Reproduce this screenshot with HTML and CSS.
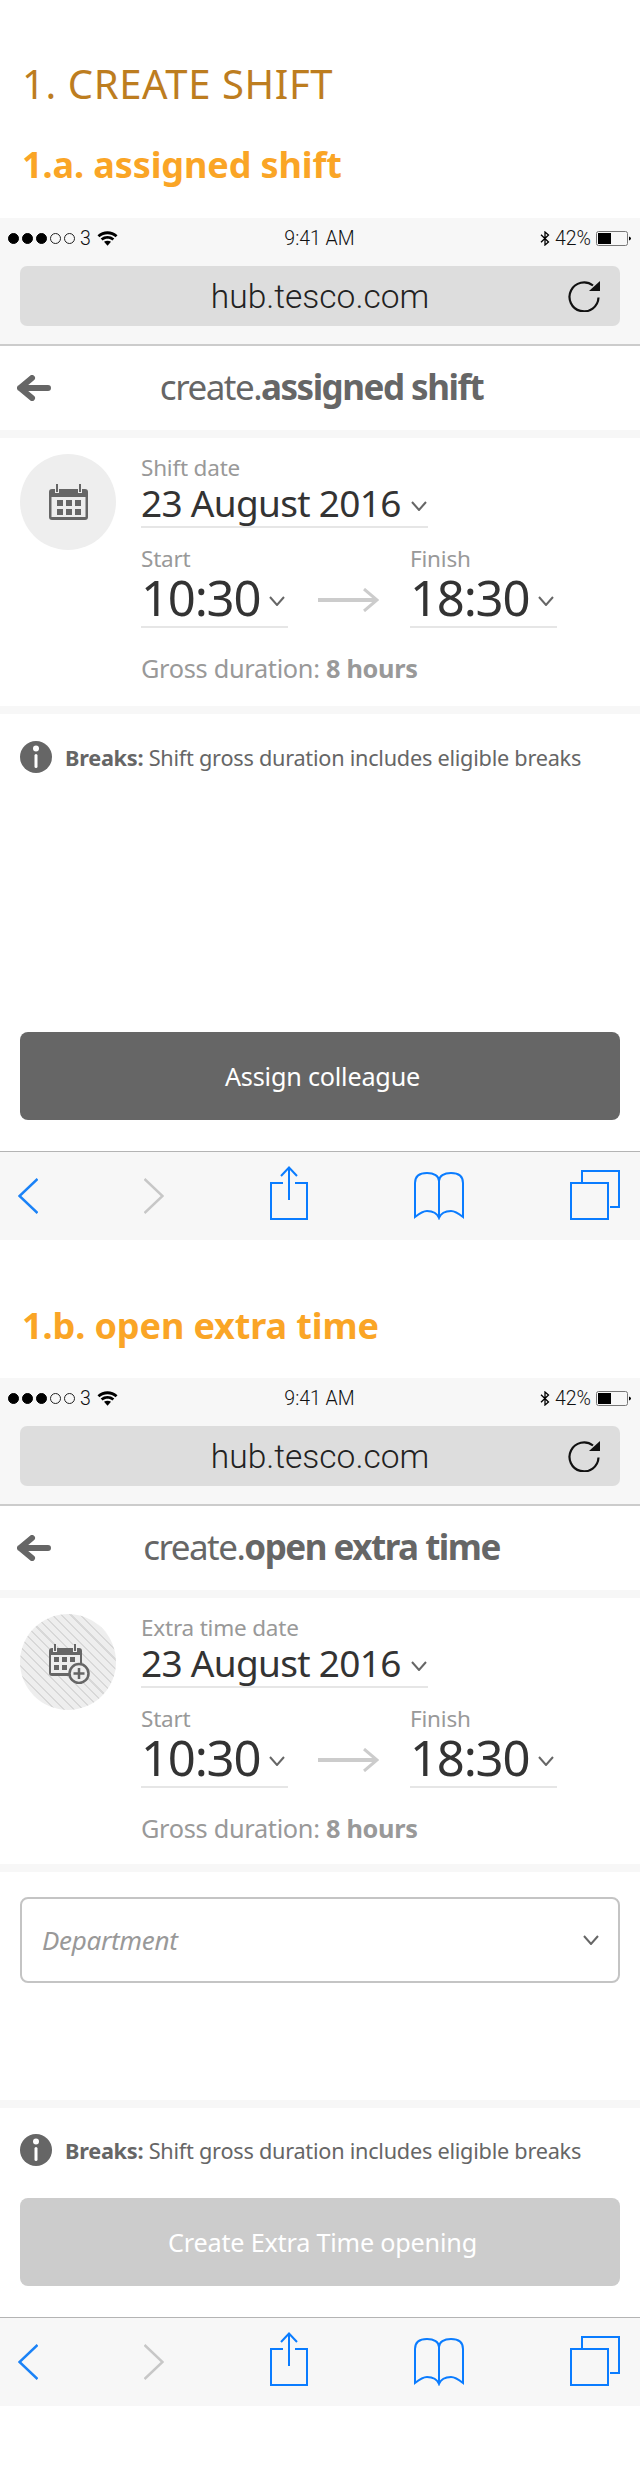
FILE: index.html
```html
<!DOCTYPE html>
<html lang="en">
<head>
<meta charset="utf-8">
<title>Create shift</title>
<link rel="stylesheet" href="styles.css">
</head>
<body>
<svg class="defs" xmlns="http://www.w3.org/2000/svg">
  <symbol id="wifi" viewBox="0 0 21 16"><path d="M0.5 5.2C6 0 15 0 20.5 5.2L18.6 7.2C14 3.2 7 3.2 2.4 7.2Z"/><path d="M3.7 8.5C7.6 5.2 13.4 5.2 17.3 8.5L15.4 10.5C12.6 8.2 8.4 8.2 5.6 10.5Z"/><path d="M7 11.8C9 10.3 12 10.3 14 11.8L10.5 15.8Z"/></symbol>
  <symbol id="bt" viewBox="0 0 10 15"><path d="M1 3.8L8.5 11L5 14V1L8.5 4L1 11.2" fill="none" stroke="#000" stroke-width="1.3"/></symbol>
  <symbol id="battery" viewBox="0 0 35 15"><rect x="0.5" y="0.5" width="31" height="14" rx="2" fill="none" stroke="#777"/><rect x="2" y="2" width="13" height="11" fill="#000"/><path d="M33 5.5C34.5 6 35 6.8 35 7.5C35 8.2 34.5 9 33 9.5Z" fill="#000"/></symbol>
  <symbol id="reload" viewBox="0 0 32 32"><path d="M25 5.5A14.5 14.5 0 1 0 30.5 17.5" fill="none" stroke="#111" stroke-width="2.2"/><path d="M21 11L32 11V1Z" fill="#111"/></symbol>
  <symbol id="back" viewBox="0 0 34 26"><path d="M3 13H31M15 3L3 13L15 23" fill="none" stroke="#666" stroke-width="6" stroke-linecap="round" stroke-linejoin="round"/></symbol>
  <symbol id="chev" viewBox="0 0 16 10"><path d="M1 1L8 9L15 1" fill="none" stroke="#666" stroke-width="2"/></symbol>
  <symbol id="long" viewBox="0 0 61 24"><path d="M0 12H59" fill="none" stroke="#ccc" stroke-width="4"/><path d="M46 1L59 12L46 23" fill="none" stroke="#ccc" stroke-width="3"/></symbol>
  <symbol id="cal" viewBox="0 0 39 36">
    <rect y="5" width="39" height="31" rx="3" fill="#666"/><rect x="2.5" y="13" width="34" height="20" fill="#eee"/>
    <path d="M8 1V9M31 1V9" stroke="#eee" stroke-width="4"/><path d="M8 0V8M31 0V8" stroke="#666" stroke-width="2"/>
    <path d="M8 16h6v6h-6zM17 16h6v6h-6zM26 16h6v6h-6zM8 25h6v6h-6zM17 25h6v6h-6zM26 25h6v6h-6z" fill="#666"/>
  </symbol>
  <symbol id="calplus" viewBox="0 0 41 40">
    <rect y="4" width="33" height="28" rx="3" fill="#666"/><rect x="2" y="11" width="29" height="18" fill="#eee"/>
    <path d="M6 1V8M26 1V8" stroke="#eee" stroke-width="4"/><path d="M6 0V7M26 0V7" stroke="#666" stroke-width="2"/>
    <path d="M5 13h5v5h-5zM13 13h5v5h-5zM21 13h5v5h-5zM5 21h5v5h-5zM13 21h5v5h-5z" fill="#666"/>
    <circle cx="30" cy="29.500" r="9.500" fill="#eee" stroke="#666" stroke-width="2.500"/><path d="M30 24V35M24.500 29.500H35.500" stroke="#666" stroke-width="2.500"/>
  </symbol>
  <symbol id="info" viewBox="0 0 32 32"><circle cx="16" cy="16" r="16" fill="#666"/><circle cx="16" cy="7.500" r="3" fill="#fff"/><rect x="14.500" y="13" width="3" height="14" rx="1.500" fill="#fff"/></symbol>
  <symbol id="tb-prev" viewBox="0 0 20 36"><path d="M19.500 1L1.500 18L19.500 35" fill="none" stroke="#1a82f7" stroke-width="2.500"/></symbol>
  <symbol id="tb-next" viewBox="0 0 20 36"><path d="M0.500 1L18.500 18L0.500 35" fill="none" stroke="#c7c7c7" stroke-width="2.500"/></symbol>
  <symbol id="tb-share" viewBox="0 0 38 54"><path d="M13 17H1V53H37V17H25" fill="none" stroke="#0a7cff" stroke-width="2"/><path d="M19 1V34M11 10L19 1.500L27 10" fill="none" stroke="#0a7cff" stroke-width="2"/></symbol>
  <symbol id="tb-book" viewBox="0 0 50 48"><path d="M25 46V9C25 4 20 1 13 1C6 1 1 4 1 11V45C6 41 9 39 13 39C19 39 23 41 25 46C27 41 31 39 37 39C41 39 44 41 49 45V11C49 4 44 1 37 1C30 1 25 4 25 9" fill="none" stroke="#0a7cff" stroke-width="2"/></symbol>
  <symbol id="tb-tabs" viewBox="0 0 50 50"><rect x="1" y="13" width="37" height="36" fill="none" stroke="#0a7cff" stroke-width="2"/><path d="M12 12V1H49V37H40" fill="none" stroke="#0a7cff" stroke-width="2"/></symbol>
</svg>

<h1 class="page-title">1. CREATE SHIFT</h1>

<h2 class="sub-title">1.a. assigned shift</h2>
<section class="phone">
  <div class="browser">
    <div class="status">
      <div class="status-left">
        <span class="dots"><i class="dot on"></i><i class="dot on"></i><i class="dot on"></i><i class="dot"></i><i class="dot"></i></span>
        <span>3</span>
        <svg class="ic-wifi"><use href="#wifi"/></svg>
      </div>
      <div>9:41 AM</div>
      <div class="status-right">
        <svg class="ic-bt"><use href="#bt"/></svg>
        <span>42%</span>
        <svg class="ic-battery"><use href="#battery"/></svg>
      </div>
    </div>
    <div class="url">
      <span>hub.tesco.com</span>
      <svg class="ic-reload"><use href="#reload"/></svg>
    </div>
  </div>
  <header class="head">
    <svg class="ic-back"><use href="#back"/></svg>
    <div class="head-title">create.<b>assigned shift</b></div>
  </header>
  <div class="card">
    <div class="badge"><svg class="ic-cal"><use href="#cal"/></svg></div>
    <div class="fields">
      <div class="label">Shift date</div>
      <div class="date"><span>23 August 2016</span><svg class="ic-chev"><use href="#chev"/></svg></div>
      <div class="times">
        <div class="time-col">
          <div class="label">Start</div>
          <div class="time"><span>10:30</span><svg class="ic-chev"><use href="#chev"/></svg></div>
        </div>
        <svg class="ic-long"><use href="#long"/></svg>
        <div class="time-col">
          <div class="label">Finish</div>
          <div class="time"><span>18:30</span><svg class="ic-chev"><use href="#chev"/></svg></div>
        </div>
      </div>
      <div class="gross">Gross duration: <b>8 hours</b></div>
    </div>
  </div>
  <div class="foot foot-tall">
    <div class="info"><svg class="ic-info"><use href="#info"/></svg><span><b>Breaks:</b> Shift gross duration includes eligible breaks</span></div>
    <div class="btn btn-dark">Assign colleague</div>
  </div>
  <nav class="toolbar">
    <svg class="tb-chev"><use href="#tb-prev"/></svg>
    <svg class="tb-chev"><use href="#tb-next"/></svg>
    <svg class="tb-share"><use href="#tb-share"/></svg>
    <svg class="tb-book"><use href="#tb-book"/></svg>
    <svg class="tb-tabs"><use href="#tb-tabs"/></svg>
  </nav>
</section>

<h2 class="sub-title sub-second">1.b. open extra time</h2>
<section class="phone">
  <div class="browser">
    <div class="status">
      <div class="status-left">
        <span class="dots"><i class="dot on"></i><i class="dot on"></i><i class="dot on"></i><i class="dot"></i><i class="dot"></i></span>
        <span>3</span>
        <svg class="ic-wifi"><use href="#wifi"/></svg>
      </div>
      <div>9:41 AM</div>
      <div class="status-right">
        <svg class="ic-bt"><use href="#bt"/></svg>
        <span>42%</span>
        <svg class="ic-battery"><use href="#battery"/></svg>
      </div>
    </div>
    <div class="url">
      <span>hub.tesco.com</span>
      <svg class="ic-reload"><use href="#reload"/></svg>
    </div>
  </div>
  <header class="head">
    <svg class="ic-back"><use href="#back"/></svg>
    <div class="head-title">create.<b>open extra time</b></div>
  </header>
  <div class="card card-short">
    <div class="badge badge-hatched"><svg class="ic-calplus"><use href="#calplus"/></svg></div>
    <div class="fields">
      <div class="label">Extra time date</div>
      <div class="date"><span>23 August 2016</span><svg class="ic-chev"><use href="#chev"/></svg></div>
      <div class="times">
        <div class="time-col">
          <div class="label">Start</div>
          <div class="time"><span>10:30</span><svg class="ic-chev"><use href="#chev"/></svg></div>
        </div>
        <svg class="ic-long"><use href="#long"/></svg>
        <div class="time-col">
          <div class="label">Finish</div>
          <div class="time"><span>18:30</span><svg class="ic-chev"><use href="#chev"/></svg></div>
        </div>
      </div>
      <div class="gross">Gross duration: <b>8 hours</b></div>
    </div>
  </div>
  <div class="dept-wrap">
    <div class="select"><em>Department</em><svg class="ic-chev"><use href="#chev"/></svg></div>
  </div>
  <div class="foot">
    <div class="info"><svg class="ic-info"><use href="#info"/></svg><span><b>Breaks:</b> Shift gross duration includes eligible breaks</span></div>
    <div class="btn btn-muted">Create Extra Time opening</div>
  </div>
  <nav class="toolbar">
    <svg class="tb-chev"><use href="#tb-prev"/></svg>
    <svg class="tb-chev"><use href="#tb-next"/></svg>
    <svg class="tb-share"><use href="#tb-share"/></svg>
    <svg class="tb-book"><use href="#tb-book"/></svg>
    <svg class="tb-tabs"><use href="#tb-tabs"/></svg>
  </nav>
</section>
</body>
</html>
```
FILE: styles.css
```css
* { box-sizing: border-box; }
html, body { margin: 0; padding: 0; background: #fff; }
body { height: 2466px; font-family: "Noto Sans", "Open Sans", sans-serif; color: #333; overflow: hidden; }
svg { display: block; flex: none; }
.defs { display: none; }

.page-title { margin: 60px 0 0 22px; font-size: 40px; line-height: 48px; font-weight: 400; color: #bd7d1f; letter-spacing: 0.6px; }
.sub-title { margin: 33px 0 29px 22px; font-size: 36px; line-height: 48px; font-weight: 700; color: #faa526; letter-spacing: -0.1px; }
.sub-second { margin: 62px 0 28px 22px; }

.browser { background: #f7f7f7; height: 128px; border-bottom: 2px solid #ccc; font-family: Roboto, sans-serif; }
.status { display: grid; grid-template-columns: 1fr auto 1fr; align-items: center; height: 48px; padding: 0 9px 8px 8px; font-size: 19.500px; color: #111; font-weight: 300; }
.status-left { display: flex; align-items: center; gap: 5px; }
.status-right { display: flex; align-items: center; justify-content: flex-end; gap: 5px; }
.dots { display: flex; gap: 3px; }
.dot { width: 11px; height: 11px; border-radius: 50%; border: 1px solid #222; }
.dot.on { background: #000; border-color: #000; }
.ic-wifi { width: 21px; height: 16px; margin-left: 1px; }
.ic-bt { width: 10px; height: 15px; }
.ic-battery { width: 35px; height: 15px; }
.url { position: relative; display: flex; align-items: center; justify-content: center; height: 60px; margin: 0 20px; background: #ddd; border-radius: 7px; font-size: 33.500px; font-weight: 300; color: #222; }
.ic-reload { position: absolute; right: 20px; top: 14px; width: 32px; height: 32px; }

.head { position: relative; display: flex; align-items: center; justify-content: center; height: 84px; }
.ic-back { position: absolute; left: 17px; top: 29px; width: 34px; height: 26px; }
.head-title { font-size: 35px; color: #666; letter-spacing: -1.500px; padding: 0 0 4px 3px; }
.head-title b { font-weight: 700; }

.card { display: flex; gap: 25px; height: 276px; padding: 16px 0 0 20px; border-top: 8px solid #f7f7f7; }
.card-short { height: 274px; }
.badge { display: flex; align-items: center; justify-content: center; width: 96px; height: 96px; border-radius: 50%; background: #eee; flex: none; }
.badge-hatched { background: repeating-linear-gradient(45deg, #eee 0 5px, #d8d8d8 5px 6.500px); padding: 4px 0 0 2px; }
.ic-cal { width: 39px; height: 36px; }
.ic-calplus { width: 41px; height: 40px; }

.fields { padding-top: 2px; }
.label { height: 24px; font-size: 22.500px; line-height: 24px; color: #999; letter-spacing: -0.200px; }
.date { display: flex; align-items: center; width: 287px; height: 48px; border-bottom: 2px solid #e6e6e6; font-size: 37px; line-height: 44px; letter-spacing: -0.700px; margin-bottom: 19px; color: #333; }
.date .ic-chev { margin: 6px 0 0 10px; }
.times { display: flex; align-items: flex-end; }
.time-col { width: 147px; }
.time { display: flex; align-items: center; height: 57px; border-bottom: 2px solid #e6e6e6; font-size: 49px; line-height: 52px; letter-spacing: -1.200px; color: #333; padding-bottom: 3px; }
.time .ic-chev { margin: 8px 0 0 9px; }
.ic-long { width: 61px; height: 24px; margin: 0 31px 16px 30px; }
.ic-chev { width: 16px; height: 10px; }
.gross { margin-top: 28px; font-size: 25.300px; line-height: 24px; color: #999; letter-spacing: -0.300px; }
.gross b { font-weight: 700; }

.dept-wrap { height: 236px; padding: 25px 20px 0; border-top: 8px solid #f7f7f7; }
.select { display: flex; align-items: center; justify-content: space-between; height: 86px; padding: 0 19px 0 20px; border: 2px solid #c4c4c4; border-radius: 8px; font-size: 26px; color: #999; letter-spacing: -0.300px; }

.foot { display: flex; flex-direction: column; justify-content: space-between; height: 217px; padding: 26px 20px 31px; border-top: 8px solid #f7f7f7; }
.foot-tall { height: 445px; padding-top: 27px; }
.info { display: flex; align-items: center; gap: 13px; font-size: 21.700px; color: #666; letter-spacing: -0.250px; }
.ic-info { width: 32px; height: 32px; }
.btn { display: flex; align-items: center; justify-content: center; height: 88px; padding-left: 5px; border-radius: 8px; color: #fff; font-size: 25.200px; letter-spacing: -0.200px; }
.btn-dark { background: #666; }
.btn-muted { background: #ccc; }

.toolbar { display: flex; align-items: flex-end; justify-content: space-between; height: 89px; padding: 0 20px 20px 18px; background: #f7f7f7; border-top: 1px solid #b4b4b4; }
.tb-chev { width: 20px; height: 36px; margin-bottom: 6px; }
.tb-share { width: 38px; height: 54px; }
.tb-book { width: 50px; height: 48px; }
.tb-tabs { width: 50px; height: 50px; }
```
